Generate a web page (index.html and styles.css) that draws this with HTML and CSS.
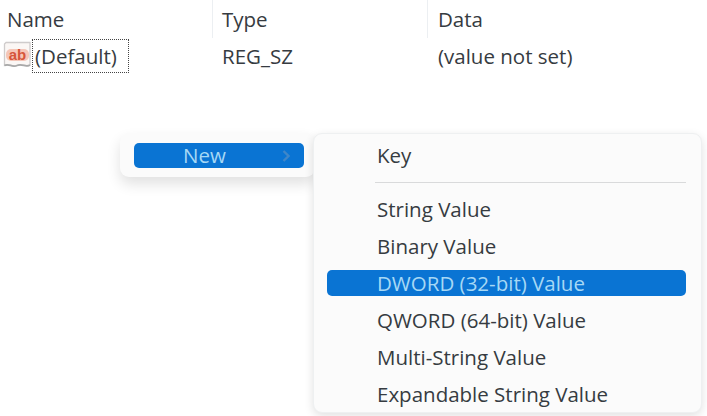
FILE: index.html
```html
<!DOCTYPE html>
<html lang="en">
<head>
<meta charset="utf-8">
<title>Registry Editor</title>
<link rel="stylesheet" href="styles.css">
</head>
<body>
<div class="list">
  <div class="row head">
    <div class="col name">Name</div>
    <div class="col type">Type</div>
    <div class="col data">Data</div>
  </div>
  <div class="row">
    <div class="col name">
      <svg class="ico" width="28" height="28" viewBox="0 0 28 28">
        <path d="M3 1.5 H27 V24 C23 27 19 22 14 24.5 C9 27 6 22 1.5 24.5 V3 Z" fill="#fbf7f5" stroke="#cfcccc" stroke-width="1.3"/>
        <path d="M1.5 24.5 C6 22 9 27 14 24.5 C19 22 23 27 27 24" fill="none" stroke="#a9a9a9" stroke-width="1.8"/>
        <rect x="3" y="8" width="23" height="12" rx="5" fill="#f3b5a3" opacity=".75"/>
        <text class="ab" x="14.5" y="19">ab</text>
      </svg>
      <span class="focus">(Default)</span>
    </div>
    <div class="col type">REG_SZ</div>
    <div class="col data">(value not set)</div>
  </div>
</div>

<div class="menu main-menu">
  <div class="item selected">
    <span class="new-label">New</span>
    <svg class="chev" width="8" height="12" viewBox="0 0 8 12"><path d="M1.5 1 L6.5 6 L1.5 11" fill="none" stroke="#3f86c8" stroke-width="2.4"/></svg>
  </div>
</div>

<div class="menu sub-menu">
  <div class="item">Key</div>
  <div class="sep"></div>
  <div class="item">String Value</div>
  <div class="item">Binary Value</div>
  <div class="item selected">DWORD (32-bit) Value</div>
  <div class="item">QWORD (64-bit) Value</div>
  <div class="item">Multi-String Value</div>
  <div class="item">Expandable String Value</div>
</div>
</body>
</html>
```
FILE: styles.css
```css
html, body {
  margin: 0;
  height: 100%;
  background: #fff;
  overflow: hidden;
}
body {
  font-family: "Open Sans", "Noto Sans", sans-serif;
  font-size: 20.5px;
  color: #363b41;
  position: relative;
}
.list {
  display: flex;
  flex-direction: column;
}
.row {
  display: flex;
  height: 34px;
  align-items: center;
}
.head {
  height: 38px;
  padding-bottom: 1px;
}
.col {
  flex: none;
  display: flex;
  align-items: center;
  height: 100%;
  box-sizing: border-box;
}
.name { width: 212px; padding-left: 7px; }
.type { width: 215px; padding-left: 9px; }
.data { width: 270px; padding-left: 10px; }
.head .type, .head .data { border-left: 1px solid #eceff2; }
.row:not(.head) .type { padding-left: 10px; }
.row:not(.head) .data { padding-left: 11px; }
.ico { flex: none; margin: -2px 0 0 -4px; }
.focus {
  border: 1.5px dotted #444;
  box-sizing: border-box;
  width: 97px;
  height: 34px;
  line-height: 33px;
  padding-left: 2px;
  margin-left: 1px;
  white-space: nowrap;
}
.ab {
  font-family: "Liberation Sans", sans-serif;
  font-weight: 700;
  font-size: 15px;
  fill: #d6553a;
  text-anchor: middle;
}
.menu {
  position: absolute;
  box-sizing: border-box;
  background: #fbfbfb;
  border-radius: 9px;
}
.main-menu {
  left: 120px;
  top: 133px;
  width: 195px;
  height: 44px;
  padding: 10px 11px 9px 14px;
  box-shadow: 0 7px 14px rgba(0, 0, 0, .12);
}
.sub-menu {
  left: 313px;
  top: 133px;
  width: 389px;
  height: 280px;
  padding: 3px 15px 0 13px;
  border: 1px solid #eef0f1;
  box-shadow: 0 3px 10px rgba(0, 0, 0, .12);
}
.item {
  height: 37px;
  display: flex;
  align-items: center;
  padding-left: 50px;
  border-radius: 5px;
}
.sep {
  height: 1px;
  background: #d9dadb;
  margin: 9px 0 7px 48px;
}
.sub-menu .item:first-child { height: 36px; }
.selected {
  background: #0a74d3;
  color: #a6d8f5;
}
.sub-menu .selected {
  height: 26px;
  margin: 6px 0 5px;
}
.main-menu .selected {
  height: 25px;
  padding: 0 0 2px 49px;
  box-sizing: border-box;
  position: relative;
}
.chev {
  position: absolute;
  right: 14px;
  top: 7px;
}
```
